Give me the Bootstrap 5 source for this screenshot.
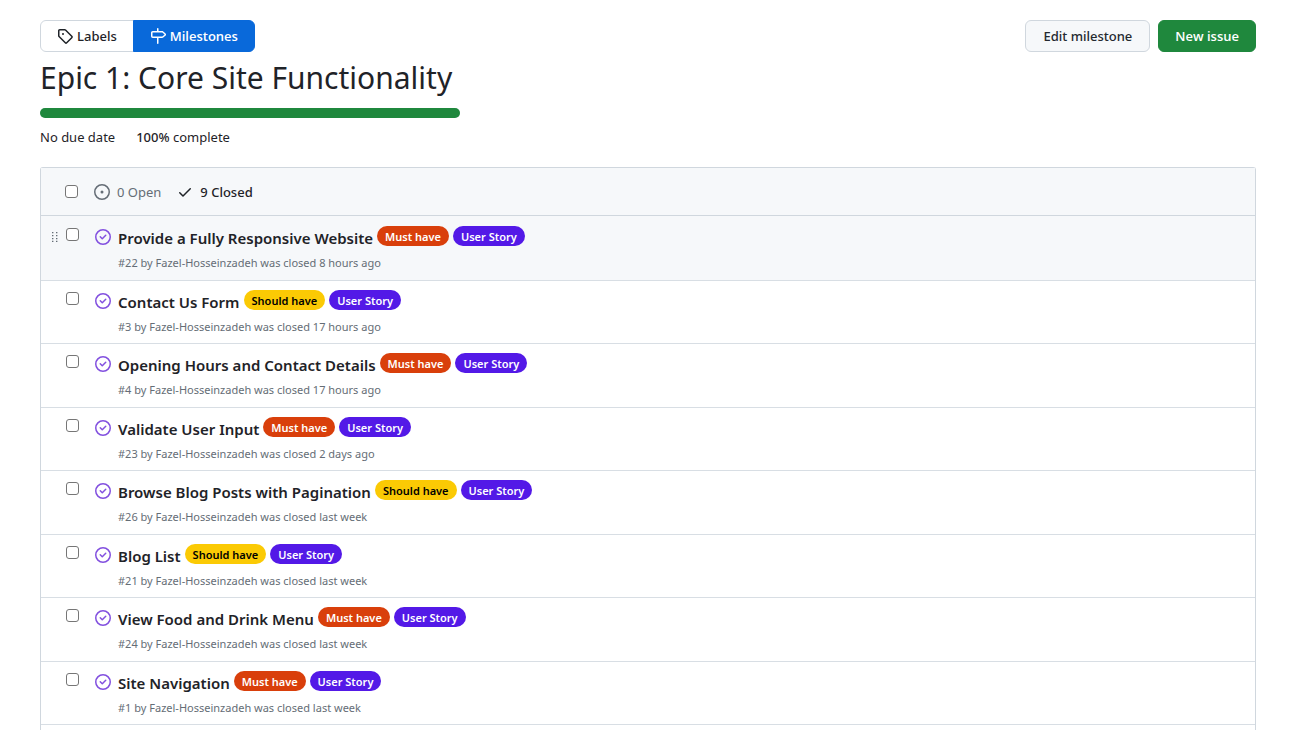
<!DOCTYPE html>
<html lang="en">
<head>
<meta charset="utf-8">
<meta name="viewport" content="width=device-width, initial-scale=1">
<title>Epic 1: Core Site Functionality</title>
<link href="https://cdn.jsdelivr.net/npm/bootstrap@5.3.0/dist/css/bootstrap.min.css" rel="stylesheet">
<style>
  body { font-family: "Noto Sans", "Open Sans", sans-serif; font-size: 13px; line-height: 20px; color: #1f2328; }
  .page { padding: 20px 53px 0 40px; height: 100vh; }
  .btn { --bs-btn-font-size: 13px; --bs-btn-line-height: 20px; --bs-btn-padding-y: 5px; --bs-btn-padding-x: 16px; --bs-btn-border-radius: 6px; --bs-btn-font-weight: 500; }
  .btn-tab { --bs-btn-color: #1f2328; --bs-btn-bg: #fff; --bs-btn-border-color: #d0d7de; --bs-btn-hover-bg: #f6f8fa; --bs-btn-hover-border-color: #d0d7de; }
  .btn-tab.active { --bs-btn-active-color: #fff; --bs-btn-active-bg: #0969da; --bs-btn-active-border-color: #0969da; }
  .btn-tab.active, .btn-new { font-family: "Open Sans", "Noto Sans", sans-serif; font-weight: 600; }
  .btn-plain { --bs-btn-padding-x: 17px; --bs-btn-color: #24292f; --bs-btn-bg: #f6f8fa; --bs-btn-border-color: #d0d7de; --bs-btn-hover-bg: #eef1f4; --bs-btn-hover-border-color: #d0d7de; }
  .btn-new { --bs-btn-color: #fff; --bs-btn-bg: #1f883d; --bs-btn-border-color: #1f883d; --bs-btn-hover-color: #fff; --bs-btn-hover-bg: #1a7f37; }
  svg { fill: currentColor; flex: none; display: block; }
  h1 { font-size: 30px; line-height: 40px; font-weight: 400; margin: 6px 0 10px; }
  .progress { --bs-progress-height: 10px; --bs-progress-border-radius: 6px; --bs-progress-bar-bg: #1f883d; max-width: 420px; }
  .facts { margin: 9px 0 20px; gap: 21px; }
  .facts strong { font-weight: 500; }
  .issues { border: 1px solid #d0d7de; border-bottom: 0; border-radius: 3px 3px 0 0; }
  .issues-head { height: 48px; padding-left: 24px; background: #f6f8fa; border-bottom: 1px solid #d0d7de; }
  .issues-head a { color: #656d76; text-decoration: none; gap: 7px; }
  .issues-head a.current { color: #1f2328; font-weight: 500; }
  .form-check-input { width: 13px; height: 13px; margin: 0; border: 1px solid #767676; flex: none; }
  .form-check-input[type=checkbox] { border-radius: 3px; }
  .list-group { --bs-list-group-bg: transparent; --bs-list-group-border-radius: 0; }
  .list-group > .issue { height: 63px; padding: 9px 0 0 11px; border-color: #d8dee4; border-width: 0 0 1px; }
  .list-group > .issue:nth-child(odd) { height: 64px; }
  .list-group > .issue:first-child { height: 65px; padding-top: 10px; background: #f6f8fa; }
  .grip { width: 6px; margin: 6px 8px 0 0; color: #656d76; }
  .issue .form-check-input { margin: 2px 16px 0 0; }
  .state { margin: 3px 7px 0 0; color: #8250df; }
  .issue-title { color: #1f2328; font-size: 15px; line-height: 24px; font-weight: 600; text-decoration: none; }
  .issue-line { gap: 4px; height: 24px; }
  .issue-meta { font-size: 11px; line-height: 18px; color: #656d76; margin-top: 4px; }
  .tag { --bs-badge-font-size: 11px; --bs-badge-font-weight: 600; --bs-badge-padding-x: 8px; --bs-badge-padding-y: 0; line-height: 21px; height: 20px; }
  .tag-must { background: #d93f0b; }
  .tag-should { background: #fbca04; color: #000; }
  .tag-story { background: #5319e7; }
</style>
</head>
<body>
<svg width="0" height="0" class="position-absolute" aria-hidden="true">
  <symbol id="closed" viewBox="0 0 16 16"><path d="M11.28 6.78a.75.75 0 0 0-1.06-1.06L7.25 8.69 5.78 7.22a.75.75 0 0 0-1.06 1.06l2 2a.75.75 0 0 0 1.06 0l3.5-3.5Z"/><path d="M16 8A8 8 0 1 1 0 8a8 8 0 0 1 16 0Zm-1.5 0a6.5 6.5 0 1 0-13 0 6.5 6.5 0 0 0 13 0Z"/></symbol>
</svg>
<main class="page d-flex flex-column overflow-hidden">
  <div class="d-flex justify-content-between">
    <nav class="btn-group" aria-label="Issue sections">
      <a href="#" class="btn btn-tab d-flex align-items-center gap-1"><svg width="16" height="16" viewBox="0 0 16 16"><path d="M1 7.775V2.75C1 1.784 1.784 1 2.75 1h5.025c.464 0 .91.184 1.238.513l6.25 6.25a1.75 1.75 0 0 1 0 2.474l-5.026 5.026a1.75 1.75 0 0 1-2.474 0l-6.25-6.25A1.752 1.752 0 0 1 1 7.775Zm1.5 0c0 .066.026.13.073.177l6.25 6.25a.25.25 0 0 0 .354 0l5.025-5.025a.25.25 0 0 0 0-.354l-6.25-6.25a.25.25 0 0 0-.177-.073H2.75a.25.25 0 0 0-.25.25ZM6 5a1 1 0 1 1 0 2 1 1 0 0 1 0-2Z"/></svg>Labels</a>
      <a href="#" class="btn btn-tab active d-flex align-items-center gap-1" aria-current="page"><svg width="16" height="16" viewBox="0 0 16 16"><path d="M7.75 0a.75.75 0 0 1 .75.75V3h3.634c.414 0 .814.147 1.13.414l2.07 1.75a1.75 1.75 0 0 1 0 2.672l-2.07 1.75a1.75 1.75 0 0 1-1.13.414H8.5v5.25a.75.75 0 0 1-1.5 0V10H2.75A1.75 1.75 0 0 1 1 8.25v-3.5C1 3.784 1.784 3 2.75 3H7V.75A.75.75 0 0 1 7.75 0Zm4.384 8.5a.25.25 0 0 0 .161-.06l2.07-1.75a.248.248 0 0 0 0-.38l-2.07-1.75a.25.25 0 0 0-.161-.06H2.75a.25.25 0 0 0-.25.25v3.5c0 .138.112.25.25.25h9.384Z"/></svg>Milestones</a>
    </nav>
    <div class="d-flex gap-2">
      <button type="button" class="btn btn-plain">Edit milestone</button>
      <button type="button" class="btn btn-new">New issue</button>
    </div>
  </div>
  <h1>Epic 1: Core Site Functionality</h1>
  <div class="progress flex-shrink-0" role="progressbar" aria-label="Milestone progress" aria-valuenow="100" aria-valuemin="0" aria-valuemax="100"><div class="progress-bar" style="width: 100%"></div></div>
  <div class="facts d-flex"><span>No due date</span><span><strong>100%</strong> complete</span></div>

  <section class="issues flex-fill">
    <div class="issues-head d-flex align-items-center">
      <input class="form-check-input me-3" type="checkbox" aria-label="Select all issues">
      <a href="#" class="d-flex align-items-center me-3"><svg width="16" height="16" viewBox="0 0 16 16"><path d="M8 9.5a1.5 1.5 0 1 0 0-3 1.5 1.5 0 0 0 0 3Z"/><path d="M8 0a8 8 0 1 1 0 16A8 8 0 0 1 8 0ZM1.5 8a6.5 6.5 0 1 0 13 0 6.5 6.5 0 0 0-13 0Z"/></svg>0 Open</a>
      <a href="#" class="current d-flex align-items-center"><svg width="16" height="16" viewBox="0 0 16 16"><path d="M13.78 4.22a.75.75 0 0 1 0 1.06l-7.25 7.25a.75.75 0 0 1-1.06 0L2.22 9.28a.751.751 0 0 1 .018-1.042.751.751 0 0 1 1.042-.018L6 10.94l6.72-6.72a.75.75 0 0 1 1.06 0Z"/></svg>9 Closed</a>
    </div>
    <ul class="list-group" id="issues"></ul>
  </section>
</main>
<script src="https://cdn.jsdelivr.net/npm/bootstrap@5.3.0/dist/js/bootstrap.bundle.min.js"></script>
<script>
  const issues = [
    [22, "Provide a Fully Responsive Website", "must", "8 hours ago"],
    [3, "Contact Us Form", "should", "17 hours ago"],
    [4, "Opening Hours and Contact Details", "must", "17 hours ago"],
    [23, "Validate User Input", "must", "2 days ago"],
    [26, "Browse Blog Posts with Pagination", "should", "last week"],
    [21, "Blog List", "should", "last week"],
    [24, "View Food and Drink Menu", "must", "last week"],
    [1, "Site Navigation", "must", "last week"]
  ];
  const names = { must: "Must have", should: "Should have" };
  const grip = '<svg width="6" height="10" viewBox="0 0 6 10"><path d="M0 0h1.4v1.2H0zM4 0h1.4v1.2H4zM0 3h1.4v1.2H0zM4 3h1.4v1.2H4zM0 6h1.4v1.2H0zM4 6h1.4v1.2H4zM0 8.8h1.4V10H0zM4 8.8h1.4V10H4z"/></svg>';
  document.getElementById("issues").innerHTML = issues.map(([id, title, kind, when], i) => `
    <li class="issue list-group-item d-flex align-items-start">
      <span class="grip">${i === 0 ? grip : ""}</span>
      <input class="form-check-input" type="checkbox" aria-label="Select ${title}">
      <svg class="state" width="16" height="16" aria-hidden="true"><use href="#closed"/></svg>
      <div>
        <div class="issue-line d-flex align-items-start"><a href="#" class="issue-title">${title}</a><span class="badge rounded-pill tag tag-${kind}">${names[kind]}</span><span class="badge rounded-pill tag tag-story">User Story</span></div>
        <div class="issue-meta">#${id} by Fazel-Hosseinzadeh was closed ${when}</div>
      </div>
    </li>`).join("");
</script>
</body>
</html>
